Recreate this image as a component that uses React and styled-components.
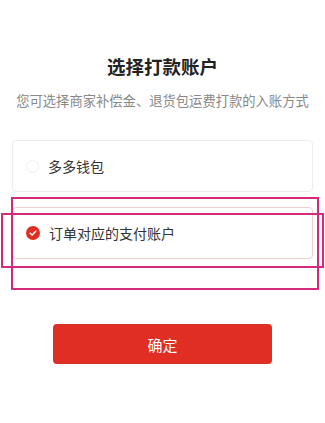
import React, { useState } from "react";
import styled, { createGlobalStyle } from "styled-components";

const GlobalStyle = createGlobalStyle`
  html, body {
    margin: 0;
    padding: 0;
    background: #fff;
  }
  body {
    font-family: "Noto Sans CJK SC", "Noto Sans", sans-serif;
  }
`;

const Page = styled.div`
  position: relative;
  width: 325px;
  height: 423px;
  box-sizing: border-box;
  padding: 54px 12px 0 12px;
  display: flex;
  flex-direction: column;
  align-items: center;
`;

const Title = styled.h1`
  margin: 0;
  font-size: 18.5px;
  line-height: 24px;
  font-weight: 700;
  color: #222;
`;

const Subtitle = styled.p`
  margin: 13px 0 0 0;
  font-size: 13.3px;
  line-height: 20px;
  color: #888;
  white-space: nowrap;
`;

const List = styled.div`
  width: 100%;
  margin-top: 29px;
  display: flex;
  flex-direction: column;
  gap: 15px;
`;

const Card = styled.div`
  height: 52px;
  box-sizing: border-box;
  border: 1px solid ${(props) => (props.active ? "#f1cfcc" : "#ececec")};
  border-radius: 4px;
  display: flex;
  align-items: center;
  padding-left: 13px;
  gap: 9px;
  cursor: pointer;
`;

const Radio = styled.span`
  width: 13px;
  height: 13px;
  border-radius: 50%;
  box-sizing: border-box;
  border: 1px solid #efefef;
  flex-shrink: 0;
`;

const Label = styled.span`
  font-size: 14px;
  line-height: 20px;
  color: #333;
`;

const ConfirmButton = styled.button`
  margin-top: 65px;
  width: 219px;
  height: 40px;
  border: none;
  border-radius: 4px;
  background: #e02e24;
  color: #fff;
  font-family: inherit;
  font-size: 15px;
  cursor: pointer;
`;

const Mark = styled.div`
  position: absolute;
  border: 2px solid #d42a7e;
  box-sizing: border-box;
  pointer-events: none;
`;

const CheckIcon = () => (
  <svg width="14" height="14" viewBox="0 0 14 14">
    <circle cx="7" cy="7" r="7" fill="#e02e24" />
    <path
      d="M4.2 7.2 L6.2 9 L9.8 5.2"
      fill="none"
      stroke="#fff"
      strokeWidth="1.4"
      strokeLinecap="round"
      strokeLinejoin="round"
    />
  </svg>
);

const options = [
  { id: "wallet", label: "多多钱包" },
  { id: "order", label: "订单对应的支付账户" },
];

export default function App() {
  const [selected, setSelected] = useState("order");

  return (
    <>
      <GlobalStyle />
      <Page>
        <Title>选择打款账户</Title>
        <Subtitle>您可选择商家补偿金、退货包运费打款的入账方式</Subtitle>
        <List>
          {options.map((o) => (
            <Card
              key={o.id}
              active={selected === o.id}
              onClick={() => setSelected(o.id)}
            >
              {selected === o.id ? <CheckIcon /> : <Radio />}
              <Label>{o.label}</Label>
            </Card>
          ))}
        </List>
        <ConfirmButton>确定</ConfirmButton>
        <Mark style={{ left: 11, top: 197, width: 308, height: 93 }} />
        <Mark style={{ left: 1, top: 213, width: 323, height: 55 }} />
      </Page>
    </>
  );
}
